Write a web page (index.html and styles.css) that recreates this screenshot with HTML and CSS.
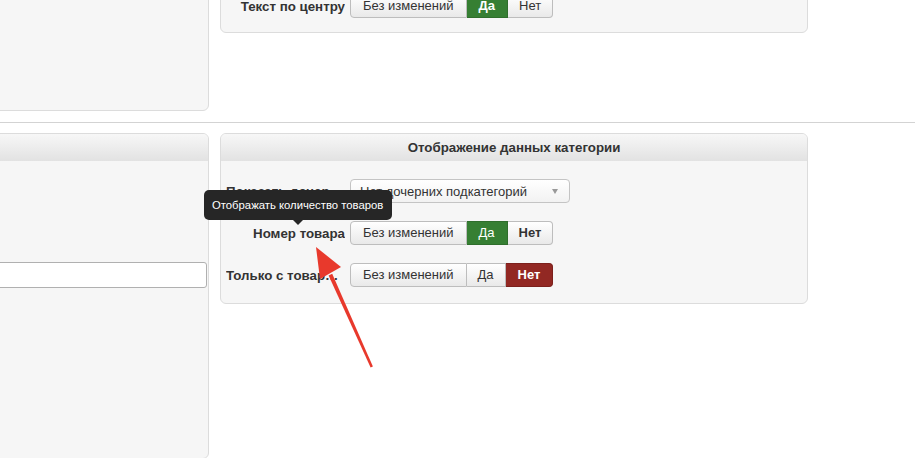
FILE: index.html
```html
<!DOCTYPE html>
<html lang="ru">
<head>
<meta charset="utf-8">
<title>Отображение данных категории</title>
<link rel="stylesheet" href="styles.css">
</head>
<body>
<div class="page">
  <div class="row top">
    <div class="panel left-top"></div>
    <div class="panel right-top">
      <div class="form-row">
        <div class="label">Текст по центру</div>
        <div class="btn-group">
          <span class="btn">Без изменений</span>
          <span class="btn green bold">Да</span>
          <span class="btn">Нет</span>
        </div>
      </div>
    </div>
  </div>
  <div class="divider"></div>
  <div class="row bottom">
    <div class="panel left-bottom">
      <div class="panel-head"></div>
      <div class="panel-body lb-body">
        <div class="text-input"></div>
      </div>
    </div>
    <div class="panel right-bottom">
      <div class="panel-head">Отображение данных категории</div>
      <div class="panel-body rows">
        <div class="form-row">
          <div class="label">Показать дочерние подкатегории</div>
          <div class="select">
            <span>Нет дочерних подкатегорий</span>
            <span class="caret"></span>
          </div>
        </div>
        <div class="form-row tip-row">
          <div class="tooltip">Отображать количество товаров<span class="tip-arrow"></span></div>
          <div class="label">Номер товара</div>
          <div class="btn-group">
            <span class="btn">Без изменений</span>
            <span class="btn green">Да</span>
            <span class="btn bold">Нет</span>
          </div>
        </div>
        <div class="form-row">
          <div class="label">Только с товарами</div>
          <div class="btn-group">
            <span class="btn">Без изменений</span>
            <span class="btn">Да</span>
            <span class="btn red bold">Нет</span>
          </div>
        </div>
      </div>
    </div>
  </div>
</div>
<svg class="annotation" width="915" height="458" viewBox="0 0 915 458">
  <polygon fill="#e8392c" points="372.9,366.4 370.6,367.4 328.6,275.4 332.2,273.8"/>
  <polygon fill="#e8392c" points="316,247 341,267 320,279"/>
</svg>
</body>
</html>
```
FILE: styles.css
```css
html, body {
  margin: 0;
  padding: 0;
  background: #ffffff;
  overflow: hidden;
  width: 915px;
  height: 458px;
}
body {
  font-family: "Liberation Sans", Arial, sans-serif;
  font-size: 13px;
  color: #333;
  position: relative;
}
.page {
  margin-top: -60px;
}
.row {
  display: grid;
  grid-template-columns: 229px 588px;
  column-gap: 11px;
  margin-left: -20px;
  align-items: start;
}
.panel {
  box-sizing: border-box;
  background: #f6f6f6;
  border: 1px solid #dcdcdc;
  border-radius: 6px;
}
.left-top { height: 171px; }
.right-top {
  height: 93px;
  display: flex;
  flex-direction: column;
  justify-content: flex-end;
  padding: 0 0 14px 5px;
}
.divider {
  margin-top: 11px;
  height: 1px;
  background: #d3d3d3;
}
.bottom { margin-top: 10px; }
.left-bottom { height: 326px; }
.right-bottom { height: 171px; }
.panel-head {
  height: 27px;
  line-height: 27px;
  text-align: center;
  font-weight: bold;
  font-size: 13.3px;
  color: #333;
  border-radius: 5px 5px 0 0;
  background: linear-gradient(#f7f7f7, #e2e2e2);
}
.lb-body {
  padding: 101px 1px 0 0;
}
.text-input {
  height: 26px;
  box-sizing: border-box;
  background: #fff;
  border: 1px solid #b0b0b0;
  border-radius: 3px;
}
.rows {
  display: flex;
  flex-direction: column;
  gap: 18px;
  padding: 18px 0 0 5px;
}
.form-row {
  display: flex;
  align-items: center;
  gap: 5px;
  height: 24px;
  position: relative;
}
.label {
  width: 119px;
  text-align: right;
  font-weight: bold;
  font-size: 13.3px;
  white-space: nowrap;
  overflow: hidden;
  text-overflow: ellipsis;
  color: #333;
}
.btn-group {
  display: flex;
  height: 24px;
}
.btn {
  box-sizing: border-box;
  height: 24px;
  line-height: 22px;
  padding: 0 11px;
  border: 1px solid #bdbdbd;
  border-left-width: 0;
  background: linear-gradient(#ffffff, #e9e9e9);
  color: #333;
  white-space: nowrap;
}
.btn:first-child {
  border-left-width: 1px;
  border-radius: 4px 0 0 4px;
  padding: 0 12px;
}
.btn:last-child {
  border-radius: 0 4px 4px 0;
  padding: 0 11px;
}
.btn.bold { font-weight: bold; }
.btn.green {
  background: #367f33;
  border-color: #2f6e2c;
  color: #fff;
  padding: 0 12px;
}
.btn.red {
  background: #922823;
  border-color: #7c201c;
  color: #fff;
  padding: 0 12px;
}
.select {
  box-sizing: border-box;
  width: 220px;
  height: 24px;
  display: flex;
  align-items: center;
  justify-content: space-between;
  padding: 0 11px 0 9px;
  background: linear-gradient(#ffffff, #f2f2f2);
  border: 1px solid #c4c4c4;
  border-radius: 4px;
  color: #333;
}
.caret {
  width: 0;
  height: 0;
  border-left: 3.5px solid transparent;
  border-right: 3.5px solid transparent;
  border-top: 5px solid #999;
}
.tooltip {
  position: absolute;
  left: -22px;
  top: -31px;
  box-sizing: border-box;
  width: 188px;
  height: 30px;
  line-height: 30px;
  padding-left: 8px;
  background: #262626;
  color: #fff;
  font-size: 11.3px;
  border-radius: 5px;
  white-space: nowrap;
  z-index: 2;
}
.tip-arrow {
  position: absolute;
  left: 89px;
  bottom: -5px;
  width: 0;
  height: 0;
  border-left: 5px solid transparent;
  border-right: 5px solid transparent;
  border-top: 5px solid #262626;
}
.annotation {
  position: absolute;
  left: 0;
  top: 0;
  pointer-events: none;
  z-index: 5;
}
```
